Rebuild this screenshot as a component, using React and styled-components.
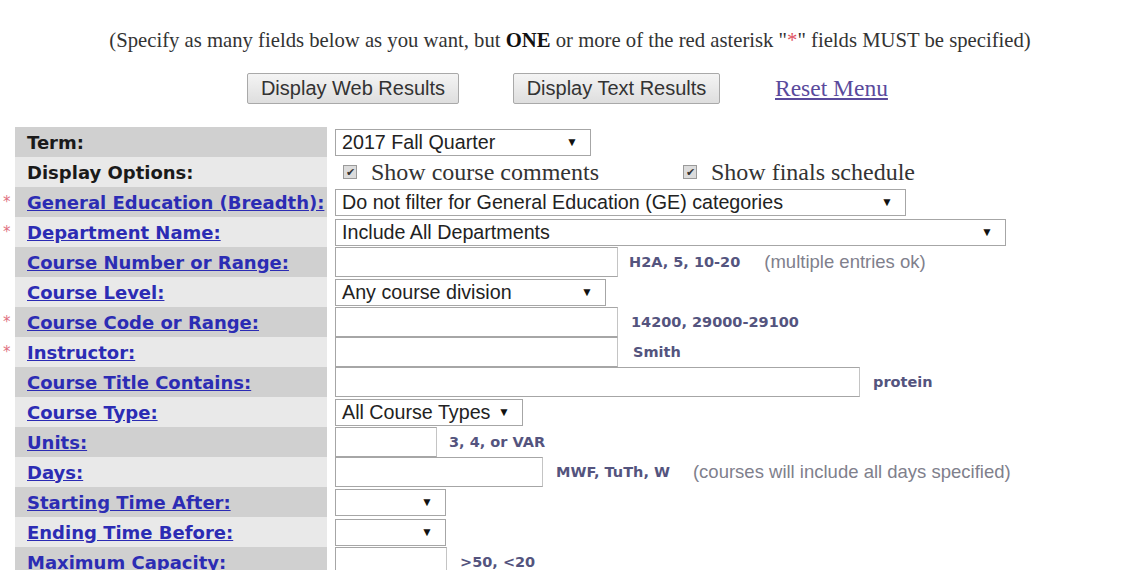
import React from "react";
import styled, { createGlobalStyle } from "styled-components";

const Global = createGlobalStyle`
  html, body { margin: 0; padding: 0; background: #fff; }
  body { width: 1140px; height: 570px; overflow: hidden; }
`;

const Page = styled.div`
  display: flex;
  flex-direction: column;
  padding-top: 27px;
`;

const Note = styled.div`
  font-family: "Liberation Serif", "Times New Roman", serif;
  font-size: 20.7px;
  color: #333;
  text-align: center;
  height: 26px;
  line-height: 26px;
  b { color: #111; }
`;

const Red = styled.span`
  color: #e05060;
`;

const ButtonBar = styled.div`
  display: flex;
  align-items: center;
  margin-top: 20px;
  padding-left: 247px;
  height: 31px;
`;

const Btn = styled.button`
  font-family: "Liberation Sans", Arial, sans-serif;
  font-size: 20px;
  color: #333;
  height: 31px;
  width: ${(p) => p.$w}px;
  margin-right: ${(p) => p.$mr}px;
  border: 1px solid #a9a9a9;
  border-radius: 2px;
  background: linear-gradient(#f4f4f4, #dedede);
  padding: 0;
`;

const ResetLink = styled.a`
  font-family: "Liberation Serif", "Times New Roman", serif;
  font-size: 23.5px;
  color: #5a4a9c;
  text-decoration: underline;
`;

const Table = styled.div`
  display: flex;
  flex-direction: column;
  margin-top: 23px;
`;

const Row = styled.div`
  display: grid;
  grid-template-columns: 15px 312px 1fr;
  height: 30px;
`;

const Star = styled.span`
  color: #e07080;
  font-family: "DejaVu Sans", Verdana, sans-serif;
  font-size: 15px;
  line-height: 1;
  padding: 8px 0 0 3px;
`;

const LabelCell = styled.div`
  background: ${(p) => (p.$dark ? "#d0d0d0" : "#e9e9e9")};
  display: flex;
  align-items: center;
  padding-left: 12px;
  font-family: "DejaVu Sans", Verdana, sans-serif;
  font-weight: bold;
  font-size: 18px;
  white-space: nowrap;
  overflow: hidden;
`;

const LabelLink = styled.a`
  color: #2c2cb4;
  text-decoration: underline;
`;

const PlainLabel = styled.span`
  color: #1a1a1a;
`;

const FieldCell = styled.div`
  display: flex;
  align-items: center;
  padding-left: 8px;
  background: #fff;
`;

const SelectBox = styled.div`
  box-sizing: border-box;
  width: ${(p) => p.$w}px;
  height: 27px;
  border: 1px solid #a6a6a6;
  background: #fff;
  display: flex;
  align-items: center;
  justify-content: space-between;
  padding: 0 12px 0 6px;
  font-family: "Liberation Sans", Arial, sans-serif;
  font-size: 19.7px;
  color: #222;
  white-space: nowrap;
`;

const Arrow = styled.span`
  font-size: 12px;
  color: #111;
`;

const TextBox = styled.div`
  box-sizing: border-box;
  width: ${(p) => p.$w}px;
  height: 30px;
  border: 1px solid #a6a6a6;
  border-right-color: #c4c4c4;
  background: #fff;
`;

const Hint = styled.span`
  font-family: "DejaVu Sans", Verdana, sans-serif;
  font-size: 14.5px;
  font-weight: bold;
  color: #54547e;
  margin-left: ${(p) => p.$ml}px;
  white-space: nowrap;
`;

const SubHint = styled.span`
  font-family: "Liberation Sans", Arial, sans-serif;
  font-size: 18.5px;
  color: #80808c;
  margin-left: ${(p) => p.$ml}px;
  white-space: nowrap;
`;

const Check = styled.span`
  box-sizing: border-box;
  width: 14px;
  height: 14px;
  margin-left: ${(p) => p.$ml}px;
  border: 1px solid #9a9a9a;
  background: #dcdcdc;
  display: inline-flex;
  align-items: center;
  justify-content: center;
  font-size: 11px;
  color: #333;
  line-height: 1;
`;

const CheckText = styled.span`
  font-family: "Liberation Serif", "Times New Roman", serif;
  font-size: 24px;
  color: #333;
  margin-left: 14px;
  width: ${(p) => p.$w || "auto"};
  white-space: nowrap;
`;

function Label({ text, link, star, dark }) {
  return (
    <>
      {star ? <Star>*</Star> : <span />}
      <LabelCell $dark={dark}>
        {link ? <LabelLink href="#">{text}</LabelLink> : <PlainLabel>{text}</PlainLabel>}
      </LabelCell>
    </>
  );
}

function Select({ w, children }) {
  return (
    <SelectBox $w={w}>
      <span>{children}</span>
      <Arrow>▼</Arrow>
    </SelectBox>
  );
}

export default function App() {
  return (
    <Page>
      <Global />
      <Note>
        (Specify as many fields below as you want, but <b>ONE</b> or more of the red asterisk "
        <Red>*</Red>" fields MUST be specified)
      </Note>
      <ButtonBar>
        <Btn $w={212} $mr={54}>Display Web Results</Btn>
        <Btn $w={207} $mr={55}>Display Text Results</Btn>
        <ResetLink href="#">Reset Menu</ResetLink>
      </ButtonBar>
      <Table>
        <Row>
          <Label text="Term:" dark />
          <FieldCell>
            <Select w={256}>2017 Fall Quarter</Select>
          </FieldCell>
        </Row>
        <Row>
          <Label text="Display Options:" />
          <FieldCell>
            <Check $ml={8}>✔</Check>
            <CheckText $w="312px">Show course comments</CheckText>
            <Check $ml={0}>✔</Check>
            <CheckText>Show finals schedule</CheckText>
          </FieldCell>
        </Row>
        <Row>
          <Label text="General Education (Breadth):" link star dark />
          <FieldCell>
            <Select w={571}>Do not filter for General Education (GE) categories</Select>
          </FieldCell>
        </Row>
        <Row>
          <Label text="Department Name:" link star />
          <FieldCell>
            <Select w={671}>Include All Departments</Select>
          </FieldCell>
        </Row>
        <Row>
          <Label text="Course Number or Range:" link dark />
          <FieldCell>
            <TextBox $w={283} />
            <Hint $ml={11}>H2A, 5, 10-20</Hint>
            <SubHint $ml={24}>(multiple entries ok)</SubHint>
          </FieldCell>
        </Row>
        <Row>
          <Label text="Course Level:" link />
          <FieldCell>
            <Select w={271}>Any course division</Select>
          </FieldCell>
        </Row>
        <Row>
          <Label text="Course Code or Range:" link star dark />
          <FieldCell>
            <TextBox $w={283} />
            <Hint $ml={13}>14200, 29000-29100</Hint>
          </FieldCell>
        </Row>
        <Row>
          <Label text="Instructor:" link star />
          <FieldCell>
            <TextBox $w={283} />
            <Hint $ml={15}>Smith</Hint>
          </FieldCell>
        </Row>
        <Row>
          <Label text="Course Title Contains:" link dark />
          <FieldCell>
            <TextBox $w={525} />
            <Hint $ml={13}>protein</Hint>
          </FieldCell>
        </Row>
        <Row>
          <Label text="Course Type:" link />
          <FieldCell>
            <Select w={188}>All Course Types</Select>
          </FieldCell>
        </Row>
        <Row>
          <Label text="Units:" link dark />
          <FieldCell>
            <TextBox $w={102} />
            <Hint $ml={12}>3, 4, or VAR</Hint>
          </FieldCell>
        </Row>
        <Row>
          <Label text="Days:" link />
          <FieldCell>
            <TextBox $w={208} />
            <Hint $ml={13}>MWF, TuTh, W</Hint>
            <SubHint $ml={23}>(courses will include all days specified)</SubHint>
          </FieldCell>
        </Row>
        <Row>
          <Label text="Starting Time After:" link dark />
          <FieldCell>
            <Select w={111} />
          </FieldCell>
        </Row>
        <Row>
          <Label text="Ending Time Before:" link />
          <FieldCell>
            <Select w={111} />
          </FieldCell>
        </Row>
        <Row>
          <Label text="Maximum Capacity:" link dark />
          <FieldCell>
            <TextBox $w={112} />
            <Hint $ml={13}>&gt;50, &lt;20</Hint>
          </FieldCell>
        </Row>
      </Table>
    </Page>
  );
}
